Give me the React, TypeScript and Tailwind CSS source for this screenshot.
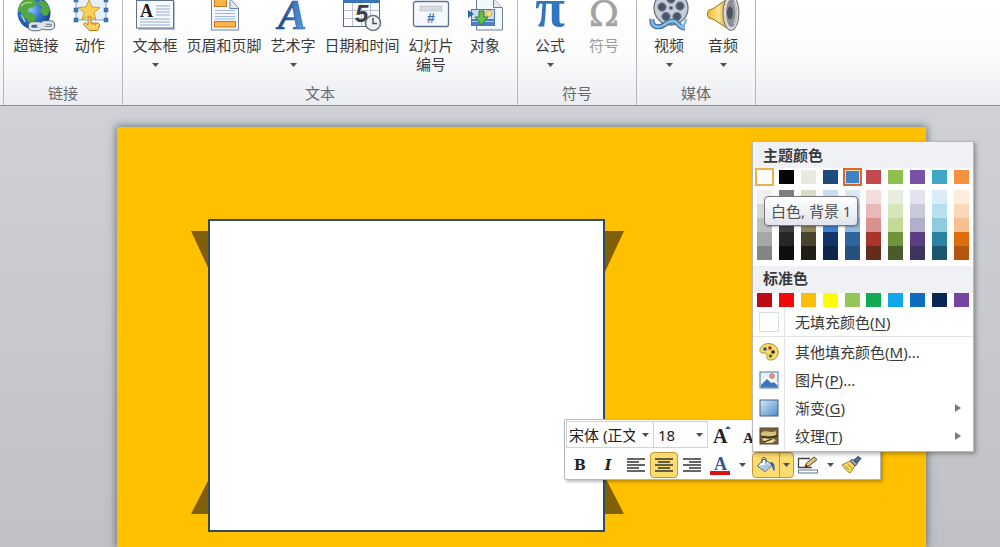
import { useState, type ReactNode } from "react";
import clsx from "clsx";

type RibbonItem = {
  label: string;
  icon: ReactNode;
  menu?: boolean;
  disabled?: boolean;
  wide?: boolean;
};

type RibbonSection = {
  title: string;
  items: RibbonItem[];
};

function RibbonIcon({ children }: { children: ReactNode }) {
  return (
    <svg width="40" height="32" viewBox="0 0 40 32" aria-hidden="true" className="shrink-0">
      {children}
    </svg>
  );
}

function Caret() {
  return (
    <svg width="7" height="4" viewBox="0 0 7 4" aria-hidden="true">
      <path d="M0 0h7L3.5 4z" fill="#505050" />
    </svg>
  );
}

function HyperlinkIcon() {
  return (
    <RibbonIcon>
      <defs>
        <radialGradient id="globe" cx="0.4" cy="0.4" r="0.65">
          <stop offset="0" stopColor="#8cc4f4" />
          <stop offset="0.5" stopColor="#2f74cf" />
          <stop offset="1" stopColor="#153b86" />
        </radialGradient>
      </defs>
      <circle cx="18" cy="13" r="16.5" fill="url(#globe)" />
      <path d="M3 6 8 0h10l3 3-3 4-5 1-2 4 5 1 4 4-2 6-4 4-2-7-5-4-2-5-3 1z" fill="#54a83c" />
      <path d="m24 0 6 2 4 7-2 6-4 1-4-5 2-4-4-3z" fill="#54a83c" />
      <path d="M5 6c4-4 8-4 11-3M5 15c2 2 3 4 4 7" fill="none" stroke="#a8d98b" strokeWidth="1.2" />
      <g fill="none" stroke="#626c78" strokeWidth="4.6">
        <rect x="14" y="23.500" width="11" height="5.500" rx="2.7" />
        <rect x="26" y="22.500" width="11" height="5.500" rx="2.7" />
        <path d="M21 26.500 30 25" />
      </g>
      <g fill="none" stroke="#dfe5ec" strokeWidth="2.4">
        <rect x="14" y="23.500" width="11" height="5.500" rx="2.7" />
        <rect x="26" y="22.500" width="11" height="5.500" rx="2.7" />
        <path d="M21 26.500 30 25" />
      </g>
    </RibbonIcon>
  );
}

function ActionIcon() {
  return (
    <RibbonIcon>
      <rect x="6" y="-4" width="30" height="24" fill="#e6f0fb" stroke="#7ba3cd" />
      <path
        d="m19 0 3 7 8 .6-6 5 2 7.400-7-4-7 4 2-7.400-6-5 8-.6z"
        fill="#f9cf55"
        stroke="#d89a24"
      />
      <g fill="#3f79b8" stroke="#2b5d98" strokeWidth=".5">
        <rect x="4" y="8" width="4" height="4" />
        <rect x="34" y="8" width="4" height="4" />
        <rect x="4" y="18" width="4" height="4" />
        <rect x="34" y="18" width="4" height="4" />
        <rect x="4" y="-2" width="4" height="4" />
        <rect x="34" y="-2" width="4" height="4" />
      </g>
      <path
        d="M18 18.500c0-2 3-2 3 0V23h6c2 0 3 1 2.500 3l-2 4.500h-8L14 25c-1-2 1-3 2.500-1.500L18 25z"
        fill="#fbd065"
        stroke="#b97b1b"
      />
      <path d="M23 23v2M25.500 23.500v2" stroke="#b97b1b" strokeWidth=".8" />
    </RibbonIcon>
  );
}

function TextBoxIcon() {
  return (
    <RibbonIcon>
      <rect x="3" y="2" width="37" height="28" fill="#b8bec7" />
      <rect x="1.500" y="0.500" width="37" height="27.500" fill="#f6f9fd" stroke="#5d7189" />
      <path
        d="M21 6h14M21 9h14M21 12h14M21 15h14M5 19h30M5 22h30M5 25h30"
        stroke="#b4c5dc"
        strokeWidth="1.4"
      />
      <text
        x="5"
        y="17"
        fontFamily="Liberation Serif, serif"
        fontWeight="bold"
        fontSize="18"
        fill="#1b1b1b"
      >
        A
      </text>
    </RibbonIcon>
  );
}

function HeaderFooterIcon() {
  return (
    <RibbonIcon>
      <path d="M7.500-2v32h27V8l-8-9z" fill="#f4f8fd" stroke="#6d84a2" />
      <path d="M26 0v8.500h8.500" fill="#dde7f3" stroke="#6d84a2" />
      <rect x="10.500" y="-2" width="12" height="8.500" fill="#fbb44b" stroke="#c77a1b" />
      <rect x="10.500" y="21.500" width="21" height="5.500" fill="#fbb44b" stroke="#c77a1b" />
      <path d="M11 10.500h20M11 13.500h20M11 16.500h20M11 19h20" stroke="#9db8dc" />
    </RibbonIcon>
  );
}

function WordArtIcon() {
  return (
    <RibbonIcon>
      <defs>
        <linearGradient id="wordart" x1="0" x2="1">
          <stop offset="0.3" stopColor="#1f5597" />
          <stop offset="1" stopColor="#62a9ea" />
        </linearGradient>
      </defs>
      <text
        x="5"
        y="29"
        fontFamily="Liberation Serif, serif"
        fontWeight="bold"
        fontStyle="italic"
        fontSize="43"
        fill="url(#wordart)"
        stroke="#1f4f8c"
        strokeWidth=".6"
      >
        A
      </text>
    </RibbonIcon>
  );
}

function DateTimeIcon() {
  return (
    <RibbonIcon>
      <rect x="1.500" y="-2" width="36" height="28.500" fill="#fafcff" stroke="#5c6675" />
      <path d="M1 0h37v3H1z" fill="#3b74b9" />
      <path d="M10.500 3v23M19.500 3v23M28.500 3v23M2 10.500h35M2 18.500h35" stroke="#b9c2cf" />
      <text
        x="13"
        y="22"
        fontFamily="Liberation Sans, sans-serif"
        fontWeight="bold"
        fontStyle="italic"
        fontSize="24"
        fill="#3a3d42"
      >
        5
      </text>
      <circle cx="31" cy="23" r="7.500" fill="#edf1f5" stroke="#6c727a" strokeWidth="1.6" />
      <path d="M31 18v5.500h4" fill="none" stroke="#454b54" strokeWidth="1.4" />
    </RibbonIcon>
  );
}

function SlideNumberIcon() {
  return (
    <RibbonIcon>
      <rect x="2.500" y="1.500" width="35" height="25" rx="2" fill="#f5f9fe" stroke="#5f728c" strokeWidth="1.3" />
      <rect x="9" y="6" width="22" height="5" fill="#d7dbe0" stroke="#b6bbc2" strokeWidth=".6" />
      <text
        x="16"
        y="23"
        fontFamily="Liberation Sans, sans-serif"
        fontWeight="bold"
        fontSize="14"
        fill="#3f71ad"
      >
        #
      </text>
    </RibbonIcon>
  );
}

function ObjectIcon() {
  return (
    <RibbonIcon>
      <path d="M11.500-2v32h26V8l-9-9z" fill="#f3f8fd" stroke="#6f7f93" />
      <path d="M28.500-1v8.500H37" fill="#e2eaf4" stroke="#6f7f93" />
      <rect x="6.500" y="9.500" width="23" height="16" fill="#c4ddf5" stroke="#4f77a8" />
      <path d="M7 19h22v6H7z" fill="#4c82c3" />
      <path d="M7 21.500h22" stroke="#a7c8ea" />
      <circle cx="24" cy="13.500" r="3" fill="#fbe07e" stroke="#d29c2d" strokeWidth=".8" />
      <path d="m3 10 6 4-6 4z" fill="#2f65a8" />
      <path d="M14 11h5v6h4l-6.500 8L10 17h4z" fill="#67bd45" stroke="#347c24" />
    </RibbonIcon>
  );
}

function EquationIcon() {
  return (
    <RibbonIcon>
      <text
        x="20"
        y="26"
        textAnchor="middle"
        fontFamily="Liberation Serif, serif"
        fontWeight="bold"
        fontSize="54"
        fill="#2f76be"
      >
        π
      </text>
    </RibbonIcon>
  );
}

function SymbolIcon() {
  return (
    <RibbonIcon>
      <text
        x="20"
        y="26"
        textAnchor="middle"
        fontFamily="DejaVu Serif, serif"
        fontSize="36"
        fill="#a3a3a3"
        stroke="#a3a3a3"
        strokeWidth=".6"
      >
        Ω
      </text>
    </RibbonIcon>
  );
}

function VideoIcon() {
  return (
    <RibbonIcon>
      <circle cx="22" cy="8" r="17" fill="#c9ced6" stroke="#6c7682" strokeWidth="1.3" />
      <g fill="#48566c" stroke="#7d8897">
        <circle cx="13" cy="7" r="4.200" />
        <circle cx="22" cy="-1" r="4.200" />
        <circle cx="31" cy="6" r="4.200" />
        <circle cx="28" cy="16.500" r="4.200" />
        <circle cx="17" cy="16.500" r="4.200" />
        <circle cx="22" cy="8" r="1.800" />
      </g>
      <path
        d="M3 19c-1 9 7 9 12 6 6-5 11-5 14-1 2 2 3 4 7 4"
        fill="none"
        stroke="#386c9e"
        strokeWidth="5"
      />
      <path
        d="M3 19c-1 9 7 9 12 6 6-5 11-5 14-1 2 2 3 4 7 4M37 19c0 4-2 6-5 7"
        fill="none"
        stroke="#89bce4"
        strokeWidth="2.600"
      />
    </RibbonIcon>
  );
}

function AudioIcon() {
  return (
    <RibbonIcon>
      <defs>
        <linearGradient id="horn" x1="0" x2="1">
          <stop offset="0" stopColor="#f0bb2c" />
          <stop offset="0.5" stopColor="#fbe58d" />
          <stop offset="1" stopColor="#c18a1a" />
        </linearGradient>
      </defs>
      <path d="M6 10c3-1 6-2 8-4l13-9v33l-14-9c-2-2-5-2-7-3-2-2-2-6 0-8z" fill="url(#horn)" stroke="#9a711f" />
      <ellipse cx="28" cy="13" rx="8" ry="17.500" fill="#d7d9dc" stroke="#6c6c6c" />
      <ellipse cx="28.500" cy="13" rx="5.500" ry="14" fill="#8b8e94" />
      <ellipse cx="27" cy="13" rx="3" ry="6.500" fill="#4f545c" />
      <path d="M31 2c3 6 3 16 0 22" fill="none" stroke="#c6c9ce" strokeWidth="1.500" />
    </RibbonIcon>
  );
}

const sections: RibbonSection[] = [
  {
    title: "链接",
    items: [
      { label: "超链接", icon: <HyperlinkIcon /> },
      { label: "动作", icon: <ActionIcon /> },
    ],
  },
  {
    title: "文本",
    items: [
      { label: "文本框", icon: <TextBoxIcon />, menu: true },
      { label: "页眉和页脚", icon: <HeaderFooterIcon />, wide: true },
      { label: "艺术字", icon: <WordArtIcon />, menu: true },
      { label: "日期和时间", icon: <DateTimeIcon />, wide: true },
      { label: "幻灯片编号", icon: <SlideNumberIcon /> },
      { label: "对象", icon: <ObjectIcon /> },
    ],
  },
  {
    title: "符号",
    items: [
      { label: "公式", icon: <EquationIcon />, menu: true },
      { label: "符号", icon: <SymbolIcon />, disabled: true },
    ],
  },
  {
    title: "媒体",
    items: [
      { label: "视频", icon: <VideoIcon />, menu: true },
      { label: "音频", icon: <AudioIcon />, menu: true },
    ],
  },
];

function Ribbon() {
  return (
    <header className="flex h-[106px] shrink-0 border-b border-[#8d9095] bg-linear-to-b from-white via-[#fcfcfd] to-[#ebedf1]">
      <div className="w-1 shrink-0 border-r border-[#b4b8be]" />
      {sections.map((section) => (
        <section
          key={section.title}
          className="flex shrink-0 flex-col justify-between border-r border-[#b4b8be] px-[5px] pb-0.5"
        >
          <div className="flex">
            {section.items.map((item) => (
              <button
                key={item.label}
                type="button"
                disabled={item.disabled}
                className={clsx(
                  "flex flex-col items-center px-1",
                  item.wide ? "w-21" : "w-[54px]",
                  item.disabled ? "text-[#9c9c9c]" : "text-[#3a3a3a]"
                )}
              >
                {item.icon}
                <span className="mt-1 leading-[19px]">{item.label}</span>
                {item.menu && (
                  <span className="mt-2">
                    <Caret />
                  </span>
                )}
              </button>
            ))}
          </div>
          <h2 className="text-center leading-5 text-[#666a70]">{section.title}</h2>
        </section>
      ))}
    </header>
  );
}

function Shape() {
  return (
    <div className="absolute top-[92px] left-[74px] h-[313px] w-[433px]">
      <svg viewBox="0 0 433 313" className="block size-full" aria-hidden="true">
        <g fill="#7f6009">
          <path d="M0 12h20v43zM433 12h-20v43z" />
          <path d="M20 256v39H0zM413 256v39h20z" />
        </g>
        <rect x="18" y="1" width="395" height="311" fill="#fff" stroke="#2f4c63" strokeWidth="2" />
      </svg>
    </div>
  );
}

function AlignIcon({ d }: { d: string }) {
  return (
    <svg width="20" height="16" viewBox="0 0 20 16" aria-hidden="true">
      <path d={d} stroke="#333" strokeWidth="1.5" />
    </svg>
  );
}

function BucketIcon() {
  return (
    <svg width="20" height="18" viewBox="0 0 20 18" aria-hidden="true">
      <path d="m8 3 8 6-7 6.500L1.500 10z" fill="#fff" stroke="#48566b" />
      <path d="m3 10 9-2 3 1-6 5.500z" fill="#a9c6e6" />
      <path d="M6 7V3c0-2 4-2 4 0v5" fill="none" stroke="#48566b" />
      <path d="M14 6c4 0 5 3 4.500 9-2-1-2-4-3-6z" fill="#2f62a8" />
    </svg>
  );
}

function OutlineIcon() {
  return (
    <svg width="22" height="18" viewBox="0 0 22 18" aria-hidden="true">
      <path d="M13 2.500H1.500v9H15" fill="none" stroke="#444" strokeWidth="1.3" />
      <path d="m8 11 1.500-4L17 1l3 2.500-8 6.500z" fill="#e6c07b" stroke="#5b4426" />
      <path d="m8 11 1-2.500L10.500 10z" fill="#222" />
      <rect x="1.500" y="14" width="19" height="3" fill="#fff" stroke="#5c7591" />
    </svg>
  );
}

function BrushIcon() {
  return (
    <svg width="22" height="18" viewBox="0 0 22 18" aria-hidden="true">
      <path d="m1 9 8-4 5 5-5 7c-2-1-5-4-8-8z" fill="#f6d667" stroke="#a98026" />
      <path d="m4 10 4 4M7 8l4 5" stroke="#bb9230" />
      <path d="m9 5 2.500-2 5 5L14 10z" fill="#8fa0b5" stroke="#48566b" />
      <path d="m13 4 4-3.500 3 2L16 7z" fill="#4c6d99" stroke="#34475f" />
    </svg>
  );
}

const toolButton = "flex h-full w-7 shrink-0 items-center justify-center";
const toolArrow = "flex h-full w-4 shrink-0 items-center justify-center";

function MiniToolbar() {
  return (
    <div
      role="toolbar"
      aria-label="格式"
      className="absolute top-[292px] left-[447px] flex w-[317px] flex-col gap-1 rounded-xs border border-[#b3b6bb] bg-white p-px text-[#222] shadow-[2px_2px_3px_rgba(0,0,0,0.25)]"
    >
      <div className="flex h-[27px]">
        <div className="relative w-[88px] shrink-0 border border-[#d0d3d7]">
          <select
            aria-label="字体"
            defaultValue="songti"
            className="h-full w-[68px] appearance-none overflow-hidden pl-0.5 leading-6 text-[#222]"
          >
            <option value="songti">宋体 (正文)</option>
            <option value="heiti">黑体</option>
          </select>
          <span className="pointer-events-none absolute top-0 right-1 flex h-full items-center">
            <Caret />
          </span>
        </div>
        <div className="relative -ml-px w-[55px] shrink-0 border border-[#d0d3d7]">
          <select
            aria-label="字号"
            defaultValue="18"
            className="size-full appearance-none pl-1 leading-6 text-[#222]"
          >
            <option value="18">18</option>
            <option value="20">20</option>
          </select>
          <span className="pointer-events-none absolute top-0 right-1 flex h-full items-center">
            <Caret />
          </span>
        </div>
        <button type="button" aria-label="增大字号" className={toolButton}>
          <svg width="22" height="22" viewBox="0 0 22 22" aria-hidden="true">
            <text x="2" y="19" fontFamily="Liberation Serif, serif" fontWeight="bold" fontSize="20" fill="#222">
              A
            </text>
            <path d="m14 5 3-3 3 3z" fill="#2c568f" />
          </svg>
        </button>
        <button type="button" aria-label="减小字号" className={toolButton}>
          <svg width="22" height="22" viewBox="0 0 22 22" aria-hidden="true">
            <text x="4" y="19" fontFamily="Liberation Serif, serif" fontWeight="bold" fontSize="15" fill="#222">
              A
            </text>
            <path d="m14 3 3 3 3-3z" fill="#2c568f" />
          </svg>
        </button>
      </div>

      <div className="flex h-[26px] items-center">
        <button
          type="button"
          aria-label="加粗"
          className={clsx(toolButton, "font-['DejaVu_Serif',serif] text-sm font-bold")}
        >
          B
        </button>
        <button
          type="button"
          aria-label="倾斜"
          className={clsx(toolButton, "font-['DejaVu_Serif',serif] text-sm font-bold italic")}
        >
          I
        </button>
        <button type="button" aria-label="左对齐" className={toolButton}>
          <AlignIcon d="M1 2h18M1 5h12M1 8h18M1 11h12M1 14h18" />
        </button>
        <button
          type="button"
          aria-label="居中"
          aria-pressed="true"
          className={clsx(toolButton, "rounded-sm border border-[#c2973a] bg-[#fbdc70]")}
        >
          <AlignIcon d="M1 2h18M4 5h12M1 8h18M4 11h12M1 14h18" />
        </button>
        <button type="button" aria-label="右对齐" className={toolButton}>
          <AlignIcon d="M1 2h18M7 5h12M1 8h18M7 11h12M1 14h18" />
        </button>
        <button type="button" aria-label="字体颜色" className={toolButton}>
          <svg width="22" height="22" viewBox="0 0 22 22" aria-hidden="true">
            <text x="5" y="16" fontFamily="Liberation Serif, serif" fontWeight="bold" fontSize="18" fill="#34598f">
              A
            </text>
            <rect x="1" y="17" width="20" height="4" fill="#dd1111" />
          </svg>
        </button>
        <button type="button" aria-label="更多字体颜色" className={toolArrow}>
          <Caret />
        </button>
        <div className="ml-0.5 flex h-full w-[42px] shrink-0 rounded-sm border border-[#c2973a] bg-[#fbdc70]">
          <button
            type="button"
            aria-label="形状填充"
            className="flex flex-1 items-center justify-center border-r border-[#c2973a]"
          >
            <BucketIcon />
          </button>
          <button
            type="button"
            aria-label="更多填充颜色"
            aria-expanded="true"
            className="flex w-[13px] items-center justify-center"
          >
            <Caret />
          </button>
        </div>
        <button type="button" aria-label="形状轮廓" className={toolButton}>
          <OutlineIcon />
        </button>
        <button type="button" aria-label="更多轮廓颜色" className={toolArrow}>
          <Caret />
        </button>
        <button type="button" aria-label="格式刷" className={toolButton}>
          <BrushIcon />
        </button>
      </div>
    </div>
  );
}

const themeColors = [
  { base: "#ffffff", tints: ["#f0f0f0", "#d8d8d8", "#bfbfbf", "#a5a7aa", "#828486"] },
  { base: "#050505", tints: ["#7f7f7f", "#595959", "#3f3f3f", "#262626", "#0e0e0e"] },
  { base: "#e9e9e1", tints: ["#dddac6", "#c4bd97", "#8f8458", "#49442c", "#1f1d14"] },
  { base: "#1d4b7c", tints: ["#c6dcf1", "#8db3e2", "#4080d4", "#12356b", "#0d2549"] },
  { base: "#3f82c4", tints: ["#dbe7f3", "#b8d0e8", "#93b9dd", "#2f659d", "#25507f"] },
  { base: "#c14b4b", tints: ["#f2dddd", "#e9b8b8", "#db9090", "#a9352b", "#652b1b"] },
  { base: "#8fc04e", tints: ["#e8eede", "#d6e5ba", "#c3d997", "#6f943b", "#4b5c2c"] },
  { base: "#7a52a3", tints: ["#e2e3ec", "#cacbd8", "#b0b0cb", "#5b3f82", "#3e355f"] },
  { base: "#3fa8c4", tints: ["#d9edf7", "#b6e0ed", "#8dcbde", "#2b83a4", "#1c566f"] },
  { base: "#f5913f", tints: ["#fdecd9", "#fbd8ba", "#f8bf91", "#e06c0c", "#b4560f"] },
];

const standardColors = [
  "#be0a12",
  "#f20a0a",
  "#fcbd0c",
  "#fdfd0a",
  "#92c658",
  "#12a955",
  "#10a6ea",
  "#0f6cbd",
  "#0b2555",
  "#7546a0",
];

function MoreColorsIcon() {
  return (
    <svg width="20" height="20" viewBox="0 0 20 20" aria-hidden="true">
      <path
        d="M3 4c4-4 12-3 15 2s0 12-6 12c-4 0-5-2-4-4s-1-3-4-3C0 11 0 7 3 4z"
        fill="#f6dc6b"
        stroke="#b18a2c"
      />
      <circle cx="6" cy="7" r="1.800" fill="#2f4f86" />
      <circle cx="11" cy="6" r="1.800" fill="#933" />
      <circle cx="14" cy="10" r="1.800" fill="#222" />
      <circle cx="11.500" cy="14" r="1.800" fill="#3f7a35" />
    </svg>
  );
}

function PictureIcon() {
  return (
    <svg width="20" height="18" viewBox="0 0 20 18" aria-hidden="true">
      <rect x="1" y="1" width="18" height="16" fill="#e6f0fa" stroke="#51749f" />
      <path d="m2 14 6-6 4 4 2-2 4 4v2.500H2z" fill="#3e75b3" />
      <path d="m2 11 6-5 5 5 2-1 4 3" fill="none" stroke="#fff" strokeWidth="1.500" />
      <circle cx="13" cy="5" r="2.200" fill="#eda47e" stroke="#b8664c" />
    </svg>
  );
}

function GradientIcon() {
  return (
    <svg width="20" height="18" viewBox="0 0 20 18" aria-hidden="true">
      <defs>
        <linearGradient id="fill" x1="0" y1="0" x2="1" y2="1">
          <stop offset="0" stopColor="#d5e9f8" />
          <stop offset="1" stopColor="#4f8cc4" />
        </linearGradient>
      </defs>
      <rect x="1" y="1" width="18" height="16" fill="url(#fill)" stroke="#45607f" />
    </svg>
  );
}

function TextureIcon() {
  return (
    <svg width="20" height="18" viewBox="0 0 20 18" aria-hidden="true">
      <rect x="1" y="1" width="18" height="16" fill="#7b6233" stroke="#4c4740" />
      <path d="M2 6c4-4 8 1 15-2v4c-5 3-10-1-15 2z" fill="#d9bf7c" />
      <path d="m3 12 5-2 9 3-4 3H7z" fill="#e6d5a0" />
      <path d="m2 9 7 2 9-2M5 15l8-3" fill="none" stroke="#33270f" strokeWidth="1.300" />
    </svg>
  );
}

type MenuRowProps = {
  icon: ReactNode;
  label: string;
  shortcut: string;
  more?: boolean;
  submenu?: boolean;
};

function MenuRow({ icon, label, shortcut, more, submenu }: MenuRowProps) {
  return (
    <button type="button" role="menuitem" className="flex h-7 w-full items-center text-left">
      <span className="flex h-full w-8 shrink-0 items-center justify-center border-r border-[#e1e3e6]">
        {icon}
      </span>
      <span className="flex-1 pl-2.5 leading-5 whitespace-nowrap">
        {label}(<u className="underline-offset-2">{shortcut}</u>){more && "..."}
      </span>
      {submenu && (
        <svg width="6" height="8" viewBox="0 0 6 8" aria-hidden="true" className="mr-3">
          <path d="M0 0v8l6-4z" fill="#7b7b7b" />
        </svg>
      )}
    </button>
  );
}

function FillMenu() {
  const [selected, setSelected] = useState(4);

  return (
    <div
      role="menu"
      className="absolute top-3.5 left-[635px] w-[222px] border border-[#b5b8bd] bg-white text-[#3a3a3a] shadow-[2px_2px_4px_rgba(0,0,0,0.3)]"
    >
      <h3 className="h-[26px] bg-[#f0f1f5] pl-2.5 leading-[26px] font-bold">主题颜色</h3>
      <div className="relative flex justify-between px-1 pt-0.5">
        {themeColors.map((color, index) => (
          <div key={color.base} className="flex w-[15px] flex-col">
            <button
              type="button"
              aria-label={`主题颜色 ${index + 1}`}
              onClick={() => setSelected(index)}
              className={clsx(
                "h-3.5",
                index === 0 && "outline-2 outline-[#eeb04a]",
                index !== 0 &&
                  index === selected &&
                  "shadow-[inset_0_0_0_1px_#f3d9a8] outline-2 outline-[#d9672c]"
              )}
              style={{ backgroundColor: color.base }}
            />
            <div className="mt-1.5">
              {color.tints.map((tint) => (
                <button
                  key={tint}
                  type="button"
                  aria-label={tint}
                  className="block h-3.5 w-full"
                  style={{ backgroundColor: tint }}
                />
              ))}
            </div>
          </div>
        ))}
        <div
          role="tooltip"
          className="absolute top-7 left-[11px] rounded-sm border border-[#77787c] bg-linear-to-b from-white to-[#e3e4ec] px-1.5 py-1 leading-5 whitespace-nowrap text-[#4d4d4d] shadow-[1px_1px_2px_rgba(0,0,0,0.3)]"
        >
          白色, 背景 1
        </div>
      </div>
      <h3 className="mt-1.5 h-[27px] bg-[#f0f1f5] pl-2.5 leading-6 font-bold">标准色</h3>
      <div className="flex justify-between px-1 pb-px">
        {standardColors.map((color) => (
          <button
            key={color}
            type="button"
            aria-label={color}
            className="h-3.5 w-[15px]"
            style={{ backgroundColor: color }}
          />
        ))}
      </div>
      <MenuRow
        icon={<span className="size-5 border border-[#dcdde0] bg-white" />}
        label="无填充颜色"
        shortcut="N"
      />
      <div className="border-t border-[#e1e3e6] py-px">
        <MenuRow icon={<MoreColorsIcon />} label="其他填充颜色" shortcut="M" more />
        <MenuRow icon={<PictureIcon />} label="图片" shortcut="P" more />
        <MenuRow icon={<GradientIcon />} label="渐变" shortcut="G" submenu />
        <MenuRow icon={<TextureIcon />} label="纹理" shortcut="T" submenu />
      </div>
    </div>
  );
}

export default function App() {
  return (
    <div className="flex h-screen flex-col overflow-hidden font-['Noto_Sans','Noto_Sans_CJK_SC',sans-serif] text-[15px]">
      <Ribbon />
      <main className="flex flex-1 flex-col overflow-hidden bg-linear-to-b from-[#cfd1d6] to-[#bfc1c6] pt-[21px] pr-[74px] pl-[117px]">
        <div className="relative flex-1 bg-[#ffc000] shadow-[0_0_8px_1px_rgba(70,80,85,0.7)]">
          <Shape />
          <MiniToolbar />
          <FillMenu />
        </div>
      </main>
    </div>
  );
}
